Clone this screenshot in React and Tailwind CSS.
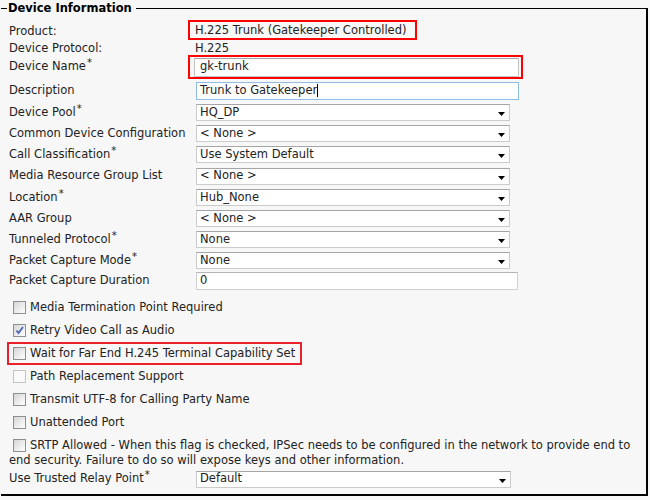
const SELECTS = [
  { label: 'Device Pool', star: true, value: 'HQ_DP', h: 'h-[21px]' },
  { label: 'Common Device Configuration', value: '< None >', h: 'h-[21px]' },
  { label: 'Call Classification', star: true, value: 'Use System Default', h: 'h-[21px]' },
  { label: 'Media Resource Group List', value: '< None >', h: 'h-[22px]' },
  { label: 'Location', star: true, value: 'Hub_None', h: 'h-[21px]' },
  { label: 'AAR Group', value: '< None >', h: 'h-[21px]' },
  { label: 'Tunneled Protocol', star: true, value: 'None', h: 'h-[21px]' },
  { label: 'Packet Capture Mode', star: true, value: 'None', h: 'h-[21px]' },
]

const CHECKS = [
  { label: 'Media Termination Point Required' },
  { label: 'Retry Video Call as Audio', checked: true },
  { label: 'Wait for Far End H.245 Terminal Capability Set', boxed: true },
  { label: 'Path Replacement Support', disabled: true },
  { label: 'Transmit UTF-8 for Calling Party Name' },
  { label: 'Unattended Port' },
]

function Star() {
  return <span className="relative -top-[4px] text-[10px] leading-none ml-[1px]">*</span>
}

function Row({ label, star, h, children, labelPad = '' }) {
  return (
    <div className={`flex items-center ${h}`}>
      <div className={`w-[186px] shrink-0 whitespace-nowrap ${labelPad}`}>
        {label}
        {star && <Star />}
      </div>
      {children}
    </div>
  )
}

function Arrow() {
  return (
    <svg width="7" height="4" viewBox="0 0 7 4" className="mt-[3px] shrink-0">
      <path d="M0 0h7L3.5 4z" fill="#000" />
    </svg>
  )
}

function Select({ value, w = 'w-[314px]' }) {
  return (
    <div className={`ml-[1px] ${w} h-[17px] flex items-center justify-between pl-[3px] pr-[4px] bg-white border border-[#cbcbcb] border-t-[#a5a5a5]`}>
      <span className="whitespace-nowrap">{value}</span>
      <Arrow />
    </div>
  )
}

function Checkbox({ checked, disabled }) {
  return (
    <span
      className={`inline-flex items-center justify-center w-[13px] h-[13px] shrink-0 align-middle border
        ${disabled
          ? 'border-[#c4c4c4] bg-[#fafafa]'
          : 'border-[#8e8f8f] bg-linear-to-br from-[#d6d6d6] to-white'}`}
    >
      {checked && (
        <svg width="11" height="11" viewBox="0 0 11 11">
          <path d="M2.5 5.5L4.5 8L9 2" stroke="#4b62b5" strokeWidth="1.8" fill="none" />
        </svg>
      )}
    </span>
  )
}

export default function App() {
  return (
    <div className="w-[650px] h-[500px] overflow-hidden bg-[#f7f7f7] text-[11.5px] text-[#222] font-['DejaVu_Sans',sans-serif]">
      <fieldset className="mt-[1px] ml-[1px] w-[647px] h-[495px] border-t border-r-2 border-b-2 border-l-0 border-black">
        <legend className="ml-[6px] px-[1px] pr-[4px] font-bold leading-[14px] text-black">
          Device Information
        </legend>

        <div className="pl-[8px] pt-[5px]">
          {/* Read-only product info */}
          <Row label="Product:" h="h-[20px]" labelPad="pt-[3px]">
            <div className="-ml-[7px] w-[229px] h-[20px] flex items-center pl-[5px] pt-[2px] border-2 border-[#ff0000] whitespace-nowrap">
              H.225 Trunk (Gatekeeper Controlled)
            </div>
          </Row>
          <Row label="Device Protocol:" h="h-[15px]" labelPad="pt-[3px]">
            <span className="pt-[3px]">H.225</span>
          </Row>

          <Row label="Device Name" star h="h-[24px]">
            <div className="-ml-[7px] w-[335px] h-[24px] flex items-center pl-[4px] border-2 border-[#ff0000]">
              <div className="w-[325px] h-[19px] flex items-center pl-[5px] bg-white border border-[#c4c4c4] border-t-[#a5a5a5]">
                gk-trunk
              </div>
            </div>
          </Row>

          <Row label="Description" h="h-[23px]">
            <div className="ml-[1px] w-[323px] h-[18px] flex items-center pl-[3px] bg-white border border-[#8fbde6]">
              Trunk to Gatekeeper
              <span className="w-px h-[13px] bg-black" />
            </div>
          </Row>

          {SELECTS.map(s => (
            <Row key={s.label} label={s.label} star={s.star} h={s.h}>
              <Select value={s.value} />
            </Row>
          ))}

          <Row label="Packet Capture Duration" h="h-[20px]">
            <div className="ml-[1px] w-[322px] h-[18px] flex items-center pl-[3px] bg-white border border-[#d0d0d0] border-t-[#b5b5b5]">
              0
            </div>
          </Row>

          {/* Checkbox options */}
          <div className="mt-[5px]">
            {CHECKS.map(c =>
              c.boxed ? (
                <div key={c.label} className="-ml-[2px] w-[295px] h-[23px] flex items-center border-2 border-[#e8212b]">
                  <span className="ml-[4px] flex"><Checkbox /></span>
                  <span className="ml-[4px] whitespace-nowrap">{c.label}</span>
                </div>
              ) : (
                <div key={c.label} className="h-[23px] flex items-center">
                  <span className="ml-[4px] flex"><Checkbox checked={c.checked} disabled={c.disabled} /></span>
                  <span className="ml-[4px] whitespace-nowrap">{c.label}</span>
                </div>
              )
            )}
          </div>

          <p className="mt-[4px] leading-[15px] whitespace-nowrap">
            <span className="ml-[4px] mr-[4px]"><Checkbox /></span>
            SRTP Allowed - When this flag is checked, IPSec needs to be configured in the network to provide end to
            <br />
            end security. Failure to do so will expose keys and other information.
          </p>

          <Row label="Use Trusted Relay Point" star h="h-[22px]">
            <Select value="Default" w="w-[315px]" />
          </Row>
        </div>
      </fieldset>
    </div>
  )
}
